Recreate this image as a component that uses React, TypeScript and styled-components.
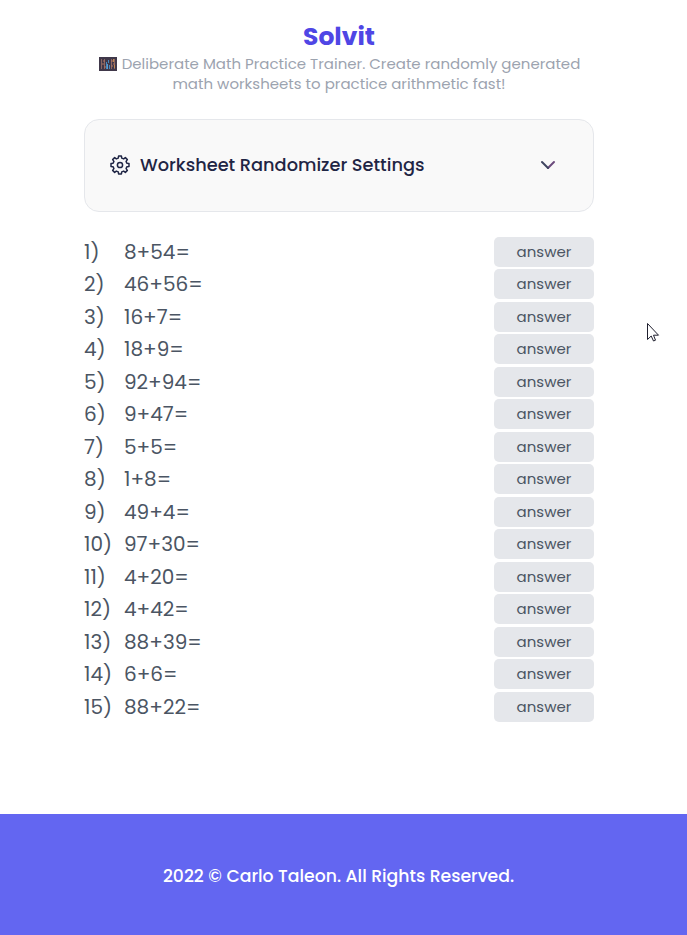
import React from "react";
import styled, { createGlobalStyle } from "styled-components";

const GlobalStyle = createGlobalStyle`
  *, *::before, *::after { box-sizing: border-box; }
  body {
    margin: 0;
    background: #fff;
    font-family: Poppins, Inter, "Open Sans", sans-serif;
    overflow: hidden;
  }
  h1, h2, p, ol { margin: 0; padding: 0; }
`;

const Page = styled.div`
  position: relative;
  display: flex;
  flex-direction: column;
  height: 935px;
`;

const Main = styled.main`
  flex: 1;
  width: 510px;
  margin-left: 84px;
`;

const Header = styled.header`
  padding-top: 18px;
  text-align: center;
`;

const Title = styled.h1`
  padding-top: 1px;
  font-size: 25px;
  line-height: 35px;
  font-weight: 700;
  color: #4f46e5;
`;

const Tagline = styled.p`
  display: flex;
  justify-content: center;
  align-items: center;
  height: 20px;
  font-size: 15px;
  line-height: 20px;
  white-space: nowrap;
  color: #9ca3af;
`;

const Abacus = styled.svg`
  width: 18px;
  height: 14px;
  margin: 0 5px 0 1px;
`;

const Settings = styled.button`
  display: flex;
  align-items: center;
  width: 510px;
  height: 93px;
  margin-top: 25px;
  padding: 0 35px 2px 23px;
  border: 1px solid #e5e7eb;
  border-radius: 15px;
  background: #f9f9f9;
  color: #1f2544;
  font-family: inherit;
`;

const SettingsLabel = styled.h2`
  flex: 1;
  margin-left: 8px;
  text-align: left;
  font-size: 17.75px;
  line-height: 28px;
  font-weight: 500;
  white-space: nowrap;
`;

const Problems = styled.ol`
  display: grid;
  row-gap: 2.5px;
  margin-top: 24.9px;
  list-style: none;
`;

const Problem = styled.li`
  display: grid;
  grid-template-columns: 40px 1fr 100px;
  align-items: center;
  height: 30px;
  font-size: 20px;
  line-height: 30px;
  color: #4b5563;
`;

const Answer = styled.button`
  height: 30px;
  padding: 0;
  border: 0;
  border-radius: 5px;
  background: #e5e7eb;
  color: #4b5563;
  font-family: inherit;
  font-size: 15px;
  line-height: 30px;
`;

const Footer = styled.footer`
  display: flex;
  justify-content: center;
  align-items: center;
  height: 121px;
  padding: 2px 10px 0 0;
  background: #6366f1;
  color: #fff;
  font-size: 17.25px;
  font-weight: 500;
  white-space: nowrap;
`;

const Pointer = styled.svg`
  position: absolute;
  left: 646px;
  top: 322px;
  width: 14px;
  height: 21px;
`;

const equations = [
  "8+54=", "46+56=", "16+7=", "18+9=", "92+94=",
  "9+47=", "5+5=", "1+8=", "49+4=", "97+30=",
  "4+20=", "4+42=", "88+39=", "6+6=", "88+22=",
];

// Outline of an eight-toothed gear centred in a 24px box.
const gearPoints = Array.from({ length: 8 })
  .flatMap((_, tooth) =>
    [[-14, 7.1], [-9, 9.1], [9, 9.1], [14, 7.1]].map(([offset, radius]) => {
      const angle = ((tooth * 45 + offset) * Math.PI) / 180;
      const x = 12 + radius * Math.sin(angle);
      const y = 12 - radius * Math.cos(angle);
      return `${x.toFixed(2)},${y.toFixed(2)}`;
    })
  )
  .join(" ");

function GearIcon() {
  return (
    <svg width="24" height="24" viewBox="0 0 24 24" fill="none" stroke="currentColor" strokeWidth="1.5" strokeLinejoin="round" aria-hidden="true">
      <polygon points={gearPoints} />
      <circle cx="12" cy="12" r="2.6" />
    </svg>
  );
}

function ChevronIcon() {
  return (
    <svg width="20" height="20" viewBox="0 0 20 20" fill="none" strokeWidth="2" strokeLinecap="round" aria-hidden="true">
      <path d="M10 13l6-6" stroke="#6b4a7c" />
      <path d="M4 7l6 6" stroke="#3f4560" />
    </svg>
  );
}

function AbacusIcon() {
  return (
    <Abacus viewBox="0 0 18 14" aria-hidden="true">
      <rect width="18" height="14" fill="#40384a" />
      <path d="M2.5 2v10M5.5 2v10M12.5 2v10M15.5 2v10" stroke="#8a6762" />
      <path d="M4 4h2M3 7h2M5 10h2M12 4h3M12 9h2M14 7h2" stroke="#b27560" />
      <path d="M7.5 5v7M9.5 3v3M10.5 8v4" stroke="#4889bd" />
      <path d="M8.5 7v5" stroke="#5c9fd2" />
      <path d="M14.5 2v3M15.5 8v3" stroke="#c3894f" />
    </Abacus>
  );
}

export default function App() {
  return (
    <>
      <GlobalStyle />
      <Page>
        <Main>
          <Header>
            <Title>Solvit</Title>
            <Tagline>
              <AbacusIcon />
              <span>Deliberate Math Practice Trainer. Create randomly generated</span>
            </Tagline>
            <Tagline>
              <span>math worksheets to practice arithmetic fast!</span>
            </Tagline>
          </Header>
          <Settings>
            <GearIcon />
            <SettingsLabel>Worksheet Randomizer Settings</SettingsLabel>
            <ChevronIcon />
          </Settings>
          <Problems>
            {equations.map((equation, i) => (
              <Problem key={i}>
                <span>{i + 1})</span>
                <span>{equation}</span>
                <Answer>answer</Answer>
              </Problem>
            ))}
          </Problems>
        </Main>
        <Footer>2022 © Carlo Taleon. All Rights Reserved.</Footer>
        <Pointer viewBox="0 0 14 21" aria-hidden="true">
          <path
            d="M1.5 1.5v16l3.7-3.5 2.3 5 2-.8-2-5h5z"
            fill="#fff"
            stroke="#1f1f2e"
            strokeWidth="1"
          />
        </Pointer>
      </Page>
    </>
  );
}
